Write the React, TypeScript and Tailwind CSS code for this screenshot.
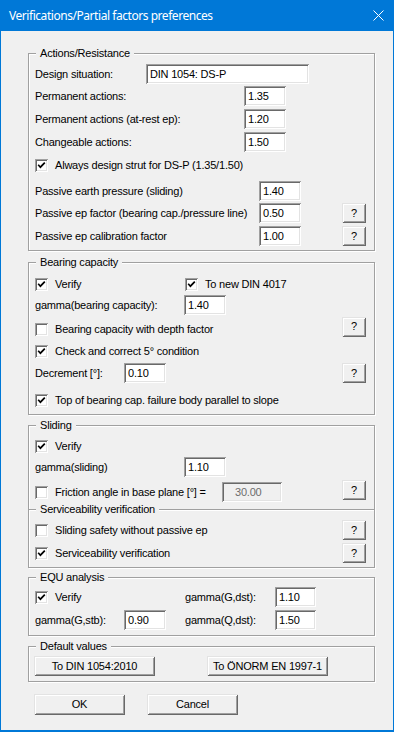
import type { ReactNode } from "react";

const SUNKEN =
  "shadow-[inset_1px_1px_0_#a0a0a0,inset_-1px_-1px_0_#ffffff,inset_2px_2px_0_#696969,inset_-2px_-2px_0_#e3e3e3]";
const RAISED =
  "shadow-[inset_1px_1px_0_#e3e3e3,inset_-1px_-1px_0_#696969,inset_2px_2px_0_#ffffff,inset_-2px_-2px_0_#a0a0a0]";

function Field({
  value,
  className = "w-[42px]",
  disabled = false,
}: {
  value: string;
  className?: string;
  disabled?: boolean;
}) {
  return (
    <div
      className={`h-[20px] shrink-0 flex items-center pl-[4px] ${SUNKEN} ${className} ${
        disabled ? "bg-[#f0f0f0] text-[#6d6d6d] pl-[13px]" : "bg-white"
      }`}
    >
      {value}
    </div>
  );
}

function Check({ checked, label }: { checked: boolean; label?: string }) {
  return (
    <div className="flex items-center gap-[7px] whitespace-nowrap">
      <div className={`w-[13px] h-[13px] shrink-0 bg-white flex items-center justify-center ${SUNKEN}`}>
        {checked && (
          <svg width="9" height="9" viewBox="0 0 9 9">
            <path d="M1.2 3.8 L3.4 6.2 L7.8 1.6" fill="none" stroke="#000" strokeWidth="1.7" />
          </svg>
        )}
      </div>
      {label && <span>{label}</span>}
    </div>
  );
}

function Btn({ children, className = "" }: { children: ReactNode; className?: string }) {
  return (
    <div
      className={`h-[20px] shrink-0 flex items-center justify-center bg-[#f0f0f0] ${RAISED} ${className}`}
    >
      {children}
    </div>
  );
}

function Help({ className = "" }: { className?: string }) {
  return <Btn className={`w-[24px] ml-auto ${className}`}>?</Btn>;
}

function Group({ title, children, className = "" }: { title: string; children: ReactNode; className?: string }) {
  return (
    <div
      className={`relative ml-[27px] w-[347px] flex flex-col border border-[#a0a0a0] shadow-[inset_1px_1px_0_#ffffff,1px_1px_0_#ffffff] ${className}`}
    >
      <span className="absolute -top-[7px] left-[7px] px-[4px] leading-[13px] bg-[#f0f0f0] whitespace-nowrap">
        {title}
      </span>
      {children}
    </div>
  );
}

function Row({ children, className = "" }: { children: ReactNode; className?: string }) {
  return <div className={`h-[20px] flex items-center pl-[6px] pr-[8px] ${className}`}>{children}</div>;
}

function Label({ children, className }: { children: ReactNode; className: string }) {
  return <span className={`shrink-0 whitespace-nowrap ${className}`}>{children}</span>;
}

export default function App() {
  return (
    <div className="w-[394px] h-[732px] flex flex-col border-x border-b-2 border-[#0078d7] bg-[#f0f0f0] text-black text-[11px] tracking-[-0.2px] font-['Liberation_Sans',Arial,sans-serif] overflow-hidden">
      {/* title bar */}
      <div className="h-[31px] shrink-0 bg-[#0078d7] flex items-center pl-[8px] pr-[9px] text-white text-[12px] tracking-[-0.45px] font-['Noto_Sans',sans-serif]">
        <span>Verifications/Partial factors preferences</span>
        <svg className="ml-auto" width="11" height="11" viewBox="0 0 11 11">
          <path d="M0.5 0.5 L10.5 10.5 M10.5 0.5 L0.5 10.5" stroke="#fff" strokeWidth="1" />
        </svg>
      </div>

      {/* Actions/Resistance */}
      <Group title="Actions/Resistance" className="mt-[22px] pb-[4px]">
        <Row className="mt-[10px]">
          <Label className="w-[111px]">Design situation:</Label>
          <Field value="DIN 1054: DS-P" className="w-[163px]" />
        </Row>
        <Row className="mt-[2px]">
          <Label className="w-[209px]">Permanent actions:</Label>
          <Field value="1.35" />
        </Row>
        <Row className="mt-[3px]">
          <Label className="w-[209px]">Permanent actions (at-rest ep):</Label>
          <Field value="1.20" />
        </Row>
        <Row className="mt-[3px]">
          <Label className="w-[209px]">Changeable actions:</Label>
          <Field value="1.50" />
        </Row>
        <Row className="mt-[3px]">
          <Check checked label="Always design strut for DS-P (1.35/1.50)" />
        </Row>
        <Row className="mt-[6px]">
          <Label className="w-[224px]">Passive earth pressure (sliding)</Label>
          <Field value="1.40" />
        </Row>
        <Row className="mt-[2px]">
          <Label className="w-[224px]">Passive ep factor (bearing cap./pressure line)</Label>
          <Field value="0.50" />
          <Help />
        </Row>
        <Row className="mt-[3px]">
          <Label className="w-[224px]">Passive ep calibration factor</Label>
          <Field value="1.00" />
          <Help />
        </Row>
      </Group>

      {/* Bearing capacity */}
      <Group title="Bearing capacity" className="mt-[11px] pb-[4px]">
        <Row className="mt-[11px]">
          <div className="w-[150px] shrink-0">
            <Check checked label="Verify" />
          </div>
          <Check checked label="To new DIN 4017" />
        </Row>
        <Row className="mt-[1px]">
          <Label className="w-[149px]">gamma(bearing capacity):</Label>
          <Field value="1.40" />
        </Row>
        <Row className="mt-[4px]">
          <Check checked={false} label="Bearing capacity with depth factor" />
          <Help className="mb-[5px]" />
        </Row>
        <Row className="mt-[2px]">
          <Check checked label="Check and correct 5° condition" />
        </Row>
        <Row className="mt-[2px]">
          <Label className="w-[89px]">Decrement [°]:</Label>
          <Field value="0.10" />
          <Help />
        </Row>
        <Row className="mt-[7px]">
          <Check checked label="Top of bearing cap. failure body parallel to slope" />
        </Row>
      </Group>

      {/* Sliding + Serviceability */}
      <Group title="Sliding" className="mt-[10px] pb-[4px]">
        <Row className="mt-[10px]">
          <Check checked label="Verify" />
        </Row>
        <Row className="mt-[1px]">
          <Label className="w-[149px]">gamma(sliding)</Label>
          <Field value="1.10" />
        </Row>
        <Row className="mt-[5px]">
          <div className="w-[187px] shrink-0">
            <Check checked={false} label="Friction angle in base plane [°] =" />
          </div>
          <Field value="30.00" className="w-[60px]" disabled />
          <Help className="mb-[4px]" />
        </Row>
        <div className="relative mt-[7px] border-t border-[#a0a0a0] shadow-[0_1px_0_#ffffff]">
          <span className="absolute -top-[7px] left-[7px] px-[4px] leading-[13px] bg-[#f0f0f0] whitespace-nowrap">
            Serviceability verification
          </span>
        </div>
        <Row className="mt-[10px]">
          <Check checked={false} label="Sliding safety without passive ep" />
          <Help />
        </Row>
        <Row className="mt-[3px]">
          <Check checked label="Serviceability verification" />
          <Help />
        </Row>
      </Group>

      {/* EQU analysis */}
      <Group title="EQU analysis" className="mt-[9px] pb-[5px]">
        <Row className="mt-[9px]">
          <div className="w-[150px] shrink-0">
            <Check checked label="Verify" />
          </div>
          <Label className="w-[90px]">gamma(G,dst):</Label>
          <Field value="1.10" className="w-[41px]" />
        </Row>
        <Row className="mt-[3px]">
          <Label className="w-[89px]">gamma(G,stb):</Label>
          <Field value="0.90" />
          <Label className="w-[90px] ml-[19px]">gamma(Q,dst):</Label>
          <Field value="1.50" className="w-[41px]" />
        </Row>
      </Group>

      {/* Default values */}
      <Group title="Default values" className="mt-[10px] pb-[5px]">
        <div className="mt-[9px] flex pl-[5px]">
          <Btn className="w-[121px]">To DIN 1054:2010</Btn>
          <Btn className="w-[121px] ml-[52px]">To ÖNORM EN 1997-1</Btn>
        </div>
      </Group>

      <div className="mt-[12px] ml-[33px] flex">
        <Btn className="w-[91px] h-[21px]">OK</Btn>
        <Btn className="w-[91px] h-[21px] ml-[22px]">Cancel</Btn>
      </div>
    </div>
  );
}
